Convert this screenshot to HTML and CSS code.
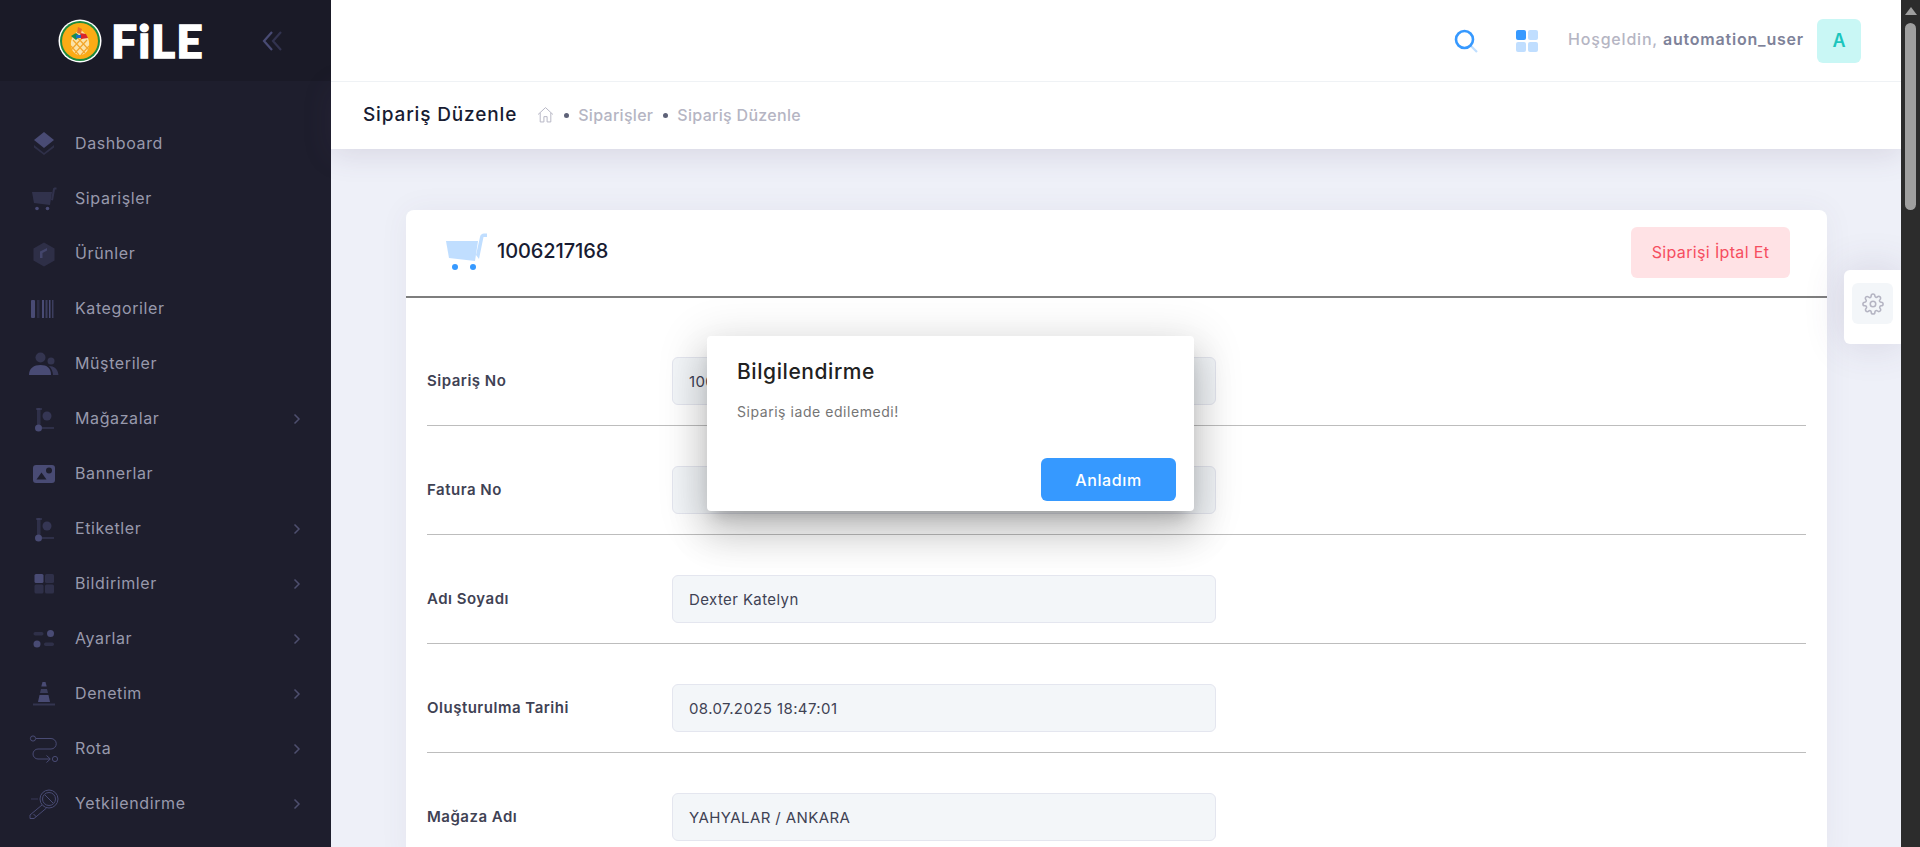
FILE: index.html
```html
<!DOCTYPE html>
<html lang="tr">
<head>
<meta charset="utf-8">
<title>Sipariş Düzenle</title>
<link rel="stylesheet" href="styles.css">
</head>
<body>
<div class="app">
  <aside class="sidebar">
    <div class="brand">
      <div class="logo">
        <svg class="logo-mark" viewBox="0 0 44 44" width="44" height="44">
          <circle cx="22" cy="22" r="21.5" fill="#fff"/>
          <circle cx="22" cy="22" r="20" fill="#1f8a3c"/>
          <circle cx="22" cy="22" r="18" fill="#fbab15"/>
          <path d="M22 10c6 5 10 10 9 17-1 6-5 9-9 9s-8-3-9-9c-1-7 3-12 9-17z" fill="#fbe3a8"/>
          <path d="M15 21l12 13M19 18l12 13M13 27l8 9M29 21l-12 13M25 18l-12 13M31 27l-8 9" stroke="#f2a52a" stroke-width="1.2" fill="none"/>
          <path d="M13 17l5-3 4 3-4 4z" fill="#1b8c4e"/>
          <path d="M22 14l6 1 2 4-7 1z" fill="#d8262c"/>
          <path d="M20 8l4 2-1 5-4-1z" fill="#e8702a"/>
          <path d="M18 16l5 0 0 3-5 0z" fill="#1c6fc4"/>
        </svg>
        <span class="logo-text">FiLE</span>
      </div>
      <svg class="collapse" viewBox="0 0 22 22" width="22" height="22">
        <path d="M11 2L3 11l8 9" fill="none" stroke="#494b74" stroke-width="2.2"/>
        <path d="M20 2l-8 9 8 9" fill="none" stroke="#32334f" stroke-width="2.2"/>
      </svg>
    </div>
    <nav class="menu">
      <a class="menu-item"><svg class="mi" viewBox="0 0 30 30"><path d="M15 3l10 8-10 8-10-8z" fill="#494b74"/><path d="M5 16l10 8 10-8v2.400l-10 7.600-10-7.600z" fill="#494b74" opacity=".4"/></svg><span class="ml">Dashboard</span></a>
      <a class="menu-item"><svg class="mi" viewBox="0 0 30 30"><path d="M3 8h20l-2 13-16-2z" fill="#494b74" opacity=".45"/><path d="M22 16l2-11c.2-1 1-1.500 2-1.500h1.500v2H26l-2 11z" fill="#494b74" opacity=".45"/><circle cx="8" cy="24.500" r="1.800" fill="#494b74"/><circle cx="18.500" cy="24.500" r="1.800" fill="#494b74"/></svg><span class="ml">Siparişler</span></a>
      <a class="menu-item"><svg class="mi" viewBox="0 0 30 30"><path d="M15 3.500l10.500 6v12L15 27.500 4.500 21.500v-12z" fill="#494b74" opacity=".38"/><path d="M11 19v-6.500l7-3.500v2.500l-4.500 2.500V19z" fill="#494b74" opacity=".8"/></svg><span class="ml">Ürünler</span></a>
      <a class="menu-item"><svg class="mi" viewBox="0 0 30 30"><rect x="2" y="6" width="4" height="18" rx="1" fill="#494b74"/><rect x="8" y="6" width="2.500" height="18" fill="#494b74" opacity=".35"/><rect x="13" y="6" width="2" height="18" fill="#494b74"/><rect x="16.500" y="6" width="2" height="18" fill="#494b74" opacity=".7"/><rect x="20" y="6" width="1.500" height="18" fill="#494b74"/><rect x="23" y="6" width="1.500" height="18" fill="#494b74" opacity=".7"/></svg><span class="ml">Kategoriler</span></a>
      <a class="menu-item"><svg class="mi" viewBox="0 0 30 30"><circle cx="11.500" cy="8.500" r="5" fill="#494b74" opacity=".5"/><circle cx="22" cy="12" r="3.500" fill="#494b74" opacity=".5"/><path d="M0 26c0-7 5-10 11.500-10S22 19 22 26z" fill="#494b74"/><path d="M20 17c5 0 9 3 9.500 9H24c0-3-1.500-6.500-4-9z" fill="#494b74" opacity=".6"/></svg><span class="ml">Müşteriler</span></a>
      <a class="menu-item"><svg class="mi" viewBox="0 0 30 30"><rect x="8" y="4" width="3.500" height="17" rx="1" fill="#494b74" opacity=".4"/><rect x="7" y="4" width="6" height="2" fill="#494b74" opacity=".4"/><circle cx="18" cy="12" r="4.500" fill="#494b74" opacity=".55"/><circle cx="9.500" cy="24" r="3.500" fill="#494b74"/><rect x="13" y="23" width="12" height="2" fill="#494b74" opacity=".4"/></svg><span class="ml">Mağazalar</span><svg class="chev" viewBox="0 0 8 12"><path d="M1.500 1.500L6 6l-4.500 4.500" fill="none" stroke="#4e4f6e" stroke-width="1.500"/></svg></a>
      <a class="menu-item"><svg class="mi" viewBox="0 0 30 30"><rect x="4" y="6" width="22" height="18" rx="3" fill="#494b74"/><path d="M7.500 20.500l5-7 5 7z" fill="#1e1e2d"/><circle cx="20" cy="11.500" r="3" fill="#1e1e2d"/></svg><span class="ml">Bannerlar</span></a>
      <a class="menu-item"><svg class="mi" viewBox="0 0 30 30"><rect x="8" y="4" width="3.500" height="17" rx="1" fill="#494b74" opacity=".4"/><rect x="7" y="4" width="6" height="2" fill="#494b74" opacity=".4"/><circle cx="18" cy="12" r="4.500" fill="#494b74" opacity=".55"/><circle cx="9.500" cy="24" r="3.500" fill="#494b74"/><rect x="13" y="23" width="12" height="2" fill="#494b74" opacity=".4"/></svg><span class="ml">Etiketler</span><svg class="chev" viewBox="0 0 8 12"><path d="M1.500 1.500L6 6l-4.500 4.500" fill="none" stroke="#4e4f6e" stroke-width="1.500"/></svg></a>
      <a class="menu-item"><svg class="mi" viewBox="0 0 30 30"><rect x="5.500" y="5" width="9" height="9" rx="1.500" fill="#494b74"/><rect x="16" y="5" width="9" height="9" rx="1.500" fill="#494b74" opacity=".4"/><rect x="5.500" y="15.500" width="9" height="9" rx="1.500" fill="#494b74" opacity=".4"/><rect x="16" y="15.500" width="9" height="9" rx="1.500" fill="#494b74" opacity=".4"/></svg><span class="ml">Bildirimler</span><svg class="chev" viewBox="0 0 8 12"><path d="M1.500 1.500L6 6l-4.500 4.500" fill="none" stroke="#4e4f6e" stroke-width="1.500"/></svg></a>
      <a class="menu-item"><svg class="mi" viewBox="0 0 30 30"><rect x="4.500" y="8" width="10" height="3.500" rx="1.700" fill="#494b74" opacity=".4"/><circle cx="21.500" cy="9.500" r="3.500" fill="#494b74"/><circle cx="8" cy="20" r="3.500" fill="#494b74"/><rect x="15" y="18.500" width="10" height="3.500" rx="1.700" fill="#494b74" opacity=".4"/></svg><span class="ml">Ayarlar</span><svg class="chev" viewBox="0 0 8 12"><path d="M1.500 1.500L6 6l-4.500 4.500" fill="none" stroke="#4e4f6e" stroke-width="1.500"/></svg></a>
      <a class="menu-item"><svg class="mi" viewBox="0 0 30 30"><path d="M13.500 3h3l1.200 4.500h-5.400z" fill="#494b74"/><path d="M12 10h6l1 4h-8z" fill="#494b74" opacity=".7"/><path d="M10.500 16h9l1.500 7H9z" fill="#494b74"/><rect x="4" y="24.500" width="22" height="2" fill="#494b74" opacity=".5"/></svg><span class="ml">Denetim</span><svg class="chev" viewBox="0 0 8 12"><path d="M1.500 1.500L6 6l-4.500 4.500" fill="none" stroke="#4e4f6e" stroke-width="1.500"/></svg></a>
      <a class="menu-item"><svg class="mi" viewBox="0 0 30 30"><g fill="none" stroke="#494b74" stroke-width="1"><circle cx="4" cy="4.500" r="2.600"/><circle cx="26" cy="25" r="2.600"/><path d="M7 4.500h15a4.500 4.500 0 0 1 0 10.500H9a4.500 4.500 0 0 0 0 10h12"/><path d="M17.500 21.500l3.800 3.500-3.800 3.500"/></g></svg><span class="ml">Rota</span><svg class="chev" viewBox="0 0 8 12"><path d="M1.500 1.500L6 6l-4.500 4.500" fill="none" stroke="#4e4f6e" stroke-width="1.500"/></svg></a>
      <a class="menu-item"><svg class="mi" viewBox="0 0 30 30"><g fill="none" stroke="#494b74" stroke-width="1"><circle cx="20" cy="10" r="9"/><circle cx="20" cy="10" r="6.500"/><path d="M16 6l8 8"/><path d="M13 16L1 26v3.500h4L17.500 19"/><path d="M2 10h7" opacity=".6"/><path d="M4.500 25l3 3"/></g></svg><span class="ml">Yetkilendirme</span><svg class="chev" viewBox="0 0 8 12"><path d="M1.500 1.500L6 6l-4.500 4.500" fill="none" stroke="#4e4f6e" stroke-width="1.500"/></svg></a>
    </nav>
  </aside>

  <main class="main">
    <header class="topbar">
      <svg class="top-search" viewBox="0 0 24 24" width="24" height="24">
        <path d="M16.500 16.500L23 23" stroke="#bfdfff" stroke-width="2.200" fill="none"/>
        <circle cx="10.500" cy="10.500" r="8.500" fill="none" stroke="#3699ff" stroke-width="2.600"/>
      </svg>
      <svg class="top-grid" viewBox="0 0 22 22" width="22" height="22">
        <rect x="0" y="0" width="10" height="10" rx="2" fill="#3699ff"/>
        <rect x="12" y="0" width="10" height="10" rx="2" fill="#c0deff"/>
        <rect x="0" y="12" width="10" height="10" rx="2" fill="#c0deff"/>
        <rect x="12" y="12" width="10" height="10" rx="2" fill="#c0deff"/>
      </svg>
      <div class="greet"><span class="greet-a">Hoşgeldin,</span> <span class="greet-b">automation_user</span></div>
      <div class="avatar">A</div>
    </header>
    <div class="toolbar">
      <h1 class="page-title">Sipariş Düzenle</h1>
      <svg class="crumb-home" viewBox="0 0 16 16" width="17" height="17">
        <path d="M1 8l7-6.500L15 8M3 6.500V15h3.500v-5h3v5H13V6.500" fill="none" stroke="#b5b5c3" stroke-width=".9"/>
      </svg>
      <span class="dot"></span><span class="crumb">Siparişler</span>
      <span class="dot"></span><span class="crumb">Sipariş Düzenle</span>
    </div>
    <section class="content">
      <div class="card">
        <div class="card-head">
          <svg class="card-cart" viewBox="0 0 41 38" width="41" height="38">
            <path d="M0 8h32l-3 20L3 25z" fill="#c0deff"/>
            <path d="M30 22L34 4c.3-2 2-3.500 4-3.500h3v3.500h-3.500L33 26z" fill="#c0deff"/>
            <circle cx="9" cy="34" r="3" fill="#3699ff"/>
            <circle cx="27" cy="34" r="3" fill="#3699ff"/>
          </svg>
          <span class="order-no">1006217168</span>
          <button class="btn-cancel" type="button">Siparişi İptal Et</button>
        </div>
        <div class="card-body">
          <div class="row"><label class="lbl">Sipariş No</label><div class="field">1006217168</div></div>
          <div class="row"><label class="lbl">Fatura No</label><div class="field"></div></div>
          <div class="row"><label class="lbl">Adı Soyadı</label><div class="field">Dexter Katelyn</div></div>
          <div class="row"><label class="lbl">Oluşturulma Tarihi</label><div class="field">08.07.2025 18:47:01</div></div>
          <div class="row"><label class="lbl">Mağaza Adı</label><div class="field">YAHYALAR / ANKARA</div></div>
        </div>
      </div>
      <div class="side-tab">
        <div class="gear-btn">
          <svg viewBox="0 0 24 24" width="22" height="22" fill="none" stroke="#b5b5c3" stroke-width="1.700">
            <circle cx="12" cy="12" r="3"/>
            <path d="M19.400 15a1.650 1.650 0 0 0 .33 1.820l.06.06a2 2 0 1 1-2.830 2.830l-.06-.06a1.650 1.650 0 0 0-2.820 1.170V21a2 2 0 0 1-4 0v-.09A1.650 1.650 0 0 0 7.280 19.700l-.06.06a2 2 0 1 1-2.830-2.830l.06-.06A1.650 1.650 0 0 0 3.090 14H3a2 2 0 0 1 0-4h.09A1.650 1.650 0 0 0 4.300 7.280l-.06-.06a2 2 0 1 1 2.830-2.830l.06.06A1.650 1.650 0 0 0 10 3.090V3a2 2 0 0 1 4 0v.09a1.650 1.650 0 0 0 2.820 1.170l.06-.06a2 2 0 1 1 2.830 2.830l-.06.06A1.650 1.650 0 0 0 20.910 10H21a2 2 0 0 1 0 4h-.09a1.650 1.650 0 0 0-1.510 1z"/>
          </svg>
        </div>
      </div>
    </section>
  </main>

  <div class="scrollbar">
    <svg class="sb-arrow" viewBox="0 0 12 8" width="12" height="8"><path d="M6 0l6 8H0z" fill="#9f9f9f"/></svg>
    <div class="sb-thumb"></div>
  </div>

  <div class="dialog" role="dialog">
    <h2 class="dlg-title">Bilgilendirme</h2>
    <p class="dlg-text">Sipariş iade edilemedi!</p>
    <div class="dlg-actions"><button class="btn-ok" type="button">Anladım</button></div>
  </div>
</div>
</body>
</html>
```

FILE: styles.css
```css
* { box-sizing: border-box; }
html, body { margin: 0; height: 100%; overflow: hidden; }
body { font-family: "Inter", "Noto Sans", sans-serif; background: #eef0f8; color: #3f4254; }

.app { display: flex; height: 847px; position: relative; overflow: hidden; }

/* Sidebar */
.sidebar { width: 331px; flex: none; background: #1e1e2d; display: flex; flex-direction: column; }
.brand { height: 81px; background: #1a1a27; display: flex; align-items: center; padding-left: 58px; flex: none; }
.logo { display: flex; align-items: center; gap: 9px; width: 203px; }
.logo-mark { flex: none; }
.logo-text { font-family: "Lato", sans-serif; font-weight: 900; font-size: 46px; line-height: 1; color: #fff; letter-spacing: 1.2px; -webkit-text-stroke: 1.4px #fff; }
.collapse { flex: none; }
.menu { padding-top: 34px; display: flex; flex-direction: column; }
.menu-item { height: 55px; display: flex; align-items: center; padding: 0 30px 0 29px; gap: 16px; }
.mi { width: 30px; height: 30px; flex: none; margin-top: 2px; }
.ml { color: #9899ac; font-size: 16px; font-weight: 400; letter-spacing: .6px; flex: 1; }
.chev { width: 8px; height: 12px; flex: none; margin-top: 2px; }

/* Main column */
.main { flex: 1; min-width: 0; display: flex; flex-direction: column; }
.topbar { height: 82px; background: #fff; border-bottom: 1px solid #eff2f5; display: flex; align-items: center; padding-right: 40px; flex: none; position: relative; z-index: 2; }
.top-search { margin-left: auto; margin-right: 38px; }
.top-grid { margin-right: 30px; }
.greet { font-size: 16px; letter-spacing: .8px; font-weight: 500; margin-right: 13px; margin-top: -3px; }
.greet-a { color: #b5b5c3; }
.greet-b { color: #7e8299; font-weight: 600; }
.avatar { width: 44px; height: 44px; border-radius: 6px; background: #c9f7f5; color: #1bc5bd; display: flex; align-items: center; justify-content: center; font-size: 18px; font-weight: 600; }
.toolbar { height: 67px; background: #fff; display: flex; align-items: center; padding-left: 32px; flex: none; box-shadow: 0 6px 30px rgba(82, 63, 105, .14); position: relative; z-index: 1; }
.page-title { margin: -2px 20px 0 0; font-size: 19px; font-weight: 500; color: #181c32; letter-spacing: .85px; }
.crumb-home { margin: -2px 8px 0 0; }
.dot { width: 5px; height: 5px; border-radius: 50%; background: #5e6278; margin: 0 9px 0 2px; flex: none; }
.crumb { color: #b5b5c3; font-size: 16px; font-weight: 500; letter-spacing: .3px; margin: -2px 8px 0 0; }

/* Content */
.content { flex: 1; padding: 61px 74px 0 75px; position: relative; overflow: hidden; }
.card { background: #fff; border-radius: 8px 8px 0 0; box-shadow: 0 0 30px rgba(82, 63, 105, .06); }
.card-head { height: 88px; border-bottom: 2px solid #7e7e7e; display: flex; align-items: center; padding: 0 37px 0 40px; }
.card-cart { flex: none; margin-top: -2px; }
.order-no { margin-left: 10px; margin-top: -4px; font-size: 20px; font-weight: 500; color: #181c32; letter-spacing: -.1px; }
.btn-cancel { margin: -2px 0 0 auto; width: 159px; height: 51px; border: 0; border-radius: 6px; background: #ffe2e5; color: #f64e60; font-family: inherit; font-size: 16px; letter-spacing: .35px; }
.card-body { padding: 19px 21px 0; }
.row { display: flex; align-items: center; padding: 40px 0 20px; border-bottom: 1px solid #bdbdbd; }
.lbl { width: 245px; flex: none; font-size: 15px; font-weight: 600; color: #3f4254; letter-spacing: .5px; margin-top: -1px; }
.field { width: 544px; height: 48px; background: #f3f6f9; border: 1px solid #e4e6ef; border-radius: 6px; padding: 0 16px; display: flex; align-items: center; font-size: 15px; color: #3f4254; letter-spacing: .4px; }

/* Floating settings tab */
.side-tab { position: absolute; right: 0; top: 121px; width: 57px; height: 74px; background: #fff; border-radius: 6px 0 0 6px; display: flex; align-items: flex-start; padding: 13px 0 0 8px; box-shadow: 0 0 40px rgba(82, 63, 105, .16); }
.gear-btn { width: 41px; height: 41px; border-radius: 6px; background: #f3f6f9; display: flex; align-items: center; justify-content: center; }

/* Fake native scrollbar */
.scrollbar { width: 19px; flex: none; background: #2c2c2c; display: flex; flex-direction: column; align-items: center; padding-top: 7px; position: relative; z-index: 2; }
.sb-thumb { width: 11px; height: 187px; margin-top: 8px; background: #9f9f9f; border-radius: 6px; }

/* Modal */
.dialog { position: absolute; left: 707px; top: 336px; width: 487px; height: 175px; background: #fff; border-radius: 4px; padding: 24px 18px 10px 30px; z-index: 5; box-shadow: 0 11px 15px -7px rgba(0, 0, 0, .2), 0 24px 38px 3px rgba(0, 0, 0, .14), 0 9px 46px 8px rgba(0, 0, 0, .12); display: flex; flex-direction: column; }
.dlg-title { margin: 0; font-size: 21px; line-height: 24px; font-weight: 500; color: #212121; letter-spacing: .57px; }
.dlg-text { margin: 18px 0 0; font-size: 14px; line-height: 20px; color: #757575; letter-spacing: .55px; }
.dlg-actions { margin-top: auto; display: flex; justify-content: flex-end; padding-bottom: 0; }
.btn-ok { width: 135px; height: 43px; border: 0; border-radius: 6px; background: #3699ff; color: #fff; font-family: inherit; font-size: 16px; font-weight: 500; letter-spacing: .6px; }
```
